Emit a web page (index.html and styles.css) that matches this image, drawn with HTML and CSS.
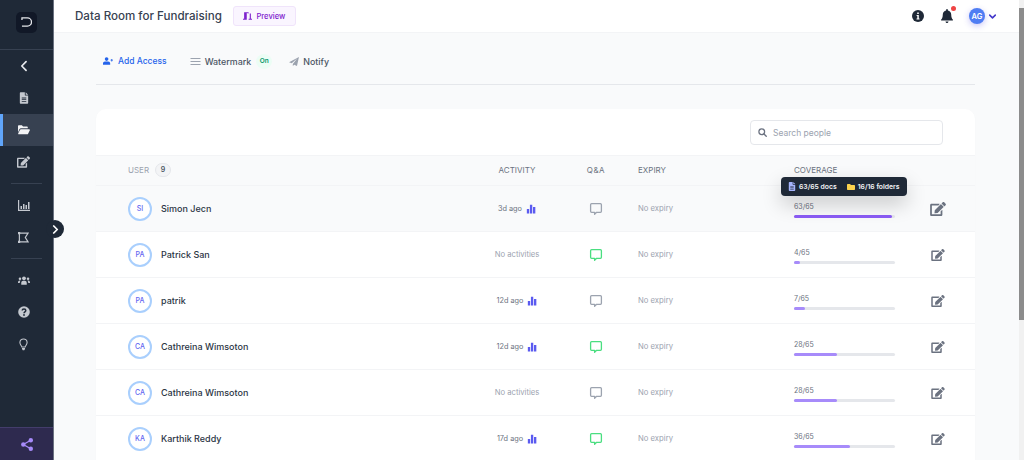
FILE: index.html
```html
<!DOCTYPE html>
<html lang="en">
<head>
    <meta charset="UTF-8">
    <meta name="viewport" content="width=device-width, initial-scale=1.0">
    <title>Data Room for Fundraising</title>
    <link rel="stylesheet" href="styles.css">
</head>
<body>

<svg class="sprites" xmlns="http://www.w3.org/2000/svg">
    <symbol id="i-edit" viewBox="0 0 576 512"><path fill="currentColor" d="M402.6 83.2l90.2 90.2c3.8 3.8 3.8 10 0 13.8L274.4 405.6l-92.8 10.3c-12.4 1.4-22.9-9.1-21.5-21.5l10.3-92.8L388.8 83.2c3.8-3.8 10-3.8 13.8 0zm162-22.9l-48.8-48.8c-15.2-15.2-39.9-15.2-55.2 0l-35.4 35.4c-3.8 3.8-3.8 10 0 13.8l90.2 90.2c3.8 3.8 10 3.8 13.8 0l35.4-35.4c15.2-15.3 15.2-40 0-55.2zM384 346.2V448H64V128h229.8c3.2 0 6.2-1.3 8.5-3.5l40-40c7.6-7.6 2.2-20.5-8.5-20.5H48C21.5 64 0 85.5 0 112v352c0 26.5 21.5 48 48 48h352c26.5 0 48-21.5 48-48V306.2c0-10.7-12.9-16-20.5-8.5l-40 40c-2.2 2.3-3.5 5.3-3.5 8.5z"/></symbol>
    <symbol id="i-bars" viewBox="0 0 12 12"><path fill="currentColor" d="M1 6h2.800v5.500H1zM4.700 1h2.800v10.500H4.700zM8.400 3.500h2.800v8H8.400z"/></symbol>
    <symbol id="i-chat" viewBox="0 0 14 14"><path fill="none" stroke="currentColor" stroke-width="1.3" stroke-linejoin="round" d="M2.6 1.7h8.8c.6 0 1 .4 1 1v6.6c0 .6-.4 1-1 1H7.6L5.6 12.3v-2H2.6c-.6 0-1-.4-1-1V2.7c0-.6.4-1 1-1z"/></symbol>
    <symbol id="i-doc" viewBox="0 0 12 14"><path fill="currentColor" d="M1 1.2C1 .5 1.5 0 2.2 0H7v3.4c0 .4.3.7.7.7H11v8.7c0 .7-.5 1.2-1.2 1.2H2.2C1.5 14 1 13.500 1 12.800zM8 0l3 3H8zM3.300 6.500v1h5.400v-1zM3.300 8.500v1h5.400v-1zM3.300 10.500v1h5.400v-1z" fill-rule="evenodd"/></symbol>
</svg>

<div class="app">
    <!-- Left rail -->
    <nav class="sidebar">
        <div class="brand">
            <span class="brand-mark">
                <svg viewBox="0 0 12 11" width="11" height="10"><path fill="none" stroke="#e5e7eb" stroke-width="1.400" d="M1 3.200V1h6a4.500 4.500 0 0 1 0 9H1"/></svg>
            </span>
        </div>
        <a class="rail-item rail-back">
            <svg viewBox="0 0 10 14" width="9" height="12"><path fill="none" stroke="currentColor" stroke-width="2" stroke-linecap="round" stroke-linejoin="round" d="M8 2L3 7l5 5"/></svg>
        </a>
        <a class="rail-item"><svg width="10" height="12"><use href="#i-doc"/></svg></a>
        <a class="rail-item active">
            <svg viewBox="0 0 14 11" width="12" height="10"><path fill="currentColor" d="M0 1.200C0 .5.500 0 1.200 0h3.300l1.400 1.400h4.400c.6 0 1.100.5 1.100 1.100v.9H3.400c-.7 0-1.300.4-1.600 1L0 8.200zM3.400 4.500H13c.7 0 1.100.7.800 1.300l-2 4.100c-.2.400-.6.600-1 .6H.9c-.6 0-.9-.6-.6-1.100l2.100-4.300c.2-.4.600-.6 1-.6z"/></svg>
        </a>
        <a class="rail-item"><svg width="13" height="12"><use href="#i-edit"/></svg></a>
        <div class="rail-divider"></div>
        <a class="rail-item">
            <svg viewBox="0 0 12 11" width="12" height="11"><path fill="currentColor" d="M0 0h1.200v9.800H12V11H0zM2.500 6h1.500v3H2.500zM5 4h1.500v5H5zM7.500 5h1.500v4H7.500zM10 2h1.500v7H10z"/></svg>
        </a>
        <a class="rail-item">
            <svg viewBox="0 0 12 12" width="11" height="11"><path fill="none" stroke="currentColor" stroke-width="1.300" d="M1.500 1.300h9.500L8 6l3 4.700H1.500z"/><path fill="currentColor" d="M0 0h2.400v2.400H0zM0 9.600h2.400V12H0z"/></svg>
        </a>
        <div class="rail-divider"></div>
        <a class="rail-item">
            <svg viewBox="0 0 14 10" width="12" height="9"><g fill="currentColor"><circle cx="7" cy="2.500" r="2.200"/><circle cx="2.300" cy="3" r="1.500"/><circle cx="11.700" cy="3" r="1.500"/><path d="M3.800 10V7.600C3.800 6.200 4.900 5.300 6 5.300h2c1.100 0 2.200.9 2.200 2.300V10zM0 7.500C0 6 .8 5 2 5h1c-.6.600-.9 1.500-.9 2.500V8H0zM14 7.500C14 6 13.200 5 12 5h-1c.6.600.9 1.500.9 2.500V8H14z"/></g></svg>
        </a>
        <a class="rail-item">
            <svg viewBox="0 0 12 12" width="12" height="12"><circle cx="6" cy="6" r="5.800" fill="currentColor"/><path fill="none" stroke="#1f2937" stroke-width="1.500" d="M4.200 4.600c0-1 .8-1.600 1.800-1.600s1.800.6 1.800 1.500C7.800 5.800 6 5.800 6 7.200"/><circle cx="6" cy="9" r=".9" fill="#1f2937"/></svg>
        </a>
        <a class="rail-item">
            <svg viewBox="0 0 10 14" width="9" height="13"><path fill="none" stroke="currentColor" stroke-width="1.200" d="M3.200 9.800C3 8.300 1 7.300 1 4.800a4 4 0 0 1 8 0c0 2.500-2 3.500-2.200 5z"/><path fill="currentColor" d="M3.300 10.800h3.400v1.200L5.800 13.500H4.200L3.300 12z"/></svg>
        </a>
        <div class="share">
            <svg viewBox="0 0 12 13" width="12" height="13"><g fill="#a78bfa"><circle cx="9.800" cy="2.300" r="2.200"/><circle cx="2.300" cy="6.500" r="2.200"/><circle cx="9.800" cy="10.700" r="2.200"/></g><path fill="none" stroke="#a78bfa" stroke-width="1.300" d="M9.800 2.300L2.300 6.500l7.500 4.200"/></svg>
        </div>
    </nav>
    <button class="rail-toggle">
        <svg viewBox="0 0 8 10" width="7" height="9"><path fill="none" stroke="#fff" stroke-width="2" stroke-linecap="round" stroke-linejoin="round" d="M2 1l4 4-4 4"/></svg>
    </button>

    <div class="main">
        <header class="topbar">
            <h1>Data Room for Fundraising</h1>
            <span class="preview-btn">
                <svg viewBox="0 0 12 10" width="9" height="8"><path fill="#7e22ce" d="M1.500 0h6v8.500H9V1.500h1.500v7H12V10H7.500V1.600L5 .9V10H0V8.500h1.500z"/></svg>
                Preview
            </span>
            <div class="topbar-right">
                <svg class="info" viewBox="0 0 12 12" width="12" height="12"><circle cx="6" cy="6" r="6" fill="#1f2937"/><path fill="#fff" d="M5.200 2.400h1.600V4H5.200zM4.600 5h2.200v3.500h.7v1H4.500v-1h.8V6h-.7z"/></svg>
                <span class="bell">
                    <svg viewBox="0 0 12 14" width="12" height="14"><path fill="#1f2937" d="M6 0c.5 0 .9.400.9.900v.6c2 .4 3.300 2 3.300 4 0 3.300 1 4.300 1.600 5 .4.400.1 1-.4 1H.6c-.5 0-.8-.6-.4-1 .6-.7 1.600-1.700 1.600-5 0-2 1.300-3.600 3.300-4V.9C5.100.4 5.500 0 6 0zM4.500 12.500h3C7.500 13.300 6.800 14 6 14s-1.500-.7-1.500-1.500z"/></svg>
                    <i class="bell-dot"></i>
                </span>
                <span class="me">AG</span>
                <svg viewBox="0 0 10 6" width="7" height="5"><path fill="none" stroke="#4338ca" stroke-width="2.200" stroke-linecap="round" stroke-linejoin="round" d="M1 1l4 4 4-4"/></svg>
            </div>
        </header>

        <div class="content">
            <div class="toolbar">
                <a class="tool tool-primary">
                    <svg viewBox="0 0 12 9" width="10" height="8"><g fill="#2563eb"><circle cx="4.300" cy="2.200" r="2.200"/><path d="M0 9V7.300C0 5.900 1 5 2.300 5h4C7.600 5 8.600 5.900 8.600 7.300V9zM9 3h1V2h1v1h1v1h-1v1h-1V4H9z"/></g></svg>
                    Add Access
                </a>
                <a class="tool">
                    <svg viewBox="0 0 10 7" width="11" height="7"><path fill="#9ca3af" d="M0 0h10v1H0zM0 3h10v1H0zM0 6h10v1H0z"/></svg>
                    <span class="tool-gap">Watermark</span>
                    <span class="badge-on">On</span>
                </a>
                <a class="tool">
                    <svg viewBox="0 0 11 10" width="10" height="9"><path fill="#9ca3af" d="M11 0L8.800 10 5.800 8.500 4.200 10V7.800L9 1.800 3 7 0 5.700z"/></svg>
                    Notify
                </a>
            </div>

            <section class="card">
                <div class="search-row">
                    <div class="search">
                        <svg viewBox="0 0 12 12" width="9" height="9"><circle cx="5" cy="5" r="3.800" fill="none" stroke="#6b7280" stroke-width="1.700"/><path stroke="#6b7280" stroke-width="1.800" stroke-linecap="round" d="M8 8l3 3"/></svg>
                        <span>Search people</span>
                    </div>
                </div>

                <div class="row head">
                    <div class="user-col">USER <span class="count">9</span></div>
                    <div class="center-col">ACTIVITY</div>
                    <div class="center-col qa-head">Q&amp;A</div>
                    <div>EXPIRY</div>
                    <div>COVERAGE</div>
                    <div></div>
                </div>

                <div class="row hovered">
                    <div class="user-col"><span class="avatar">SI</span><span class="name">Simon Jecn</span></div>
                    <div class="center-col activity">3d ago <svg width="10" height="10"><use href="#i-bars"/></svg></div>
                    <div class="center-col"><svg class="chat" width="14" height="14"><use href="#i-chat"/></svg></div>
                    <div class="expiry">No expiry</div>
                    <div class="coverage">
                        <span class="cov-label">63/65</span>
                        <div class="track"><div class="fill strong" style="width: 97%"></div></div>
                    </div>
                    <div class="edit"><svg width="16" height="14"><use href="#i-edit"/></svg></div>
                    <div class="cov-tip">
                        <svg width="8" height="9"><use href="#i-doc"/></svg>
                        <span>63/65 docs</span>
                        <svg class="tip-folder" viewBox="0 0 12 9" width="8" height="6"><path fill="#fcd34d" d="M1 0h3.500L6 1.500h5c.6 0 1 .4 1 1V8c0 .6-.4 1-1 1H1c-.6 0-1-.4-1-1V1c0-.6.4-1 1-1z"/></svg>
                        <span>16/16 folders</span>
                    </div>
                </div>

                <div class="row">
                    <div class="user-col"><span class="avatar">PA</span><span class="name">Patrick San</span></div>
                    <div class="center-col no-activity">No activities</div>
                    <div class="center-col"><svg class="chat green" width="14" height="14"><use href="#i-chat"/></svg></div>
                    <div class="expiry">No expiry</div>
                    <div class="coverage">
                        <span class="cov-label">4/65</span>
                        <div class="track"><div class="fill" style="width: 6%"></div></div>
                    </div>
                    <div class="edit edit-small"><svg width="14" height="12"><use href="#i-edit"/></svg></div>
                </div>

                <div class="row">
                    <div class="user-col"><span class="avatar">PA</span><span class="name">patrik</span></div>
                    <div class="center-col activity">12d ago <svg width="10" height="10"><use href="#i-bars"/></svg></div>
                    <div class="center-col"><svg class="chat" width="14" height="14"><use href="#i-chat"/></svg></div>
                    <div class="expiry">No expiry</div>
                    <div class="coverage">
                        <span class="cov-label">7/65</span>
                        <div class="track"><div class="fill" style="width: 11%"></div></div>
                    </div>
                    <div class="edit edit-small"><svg width="14" height="12"><use href="#i-edit"/></svg></div>
                </div>

                <div class="row">
                    <div class="user-col"><span class="avatar">CA</span><span class="name">Cathreina Wimsoton</span></div>
                    <div class="center-col activity">12d ago <svg width="10" height="10"><use href="#i-bars"/></svg></div>
                    <div class="center-col"><svg class="chat green" width="14" height="14"><use href="#i-chat"/></svg></div>
                    <div class="expiry">No expiry</div>
                    <div class="coverage">
                        <span class="cov-label">28/65</span>
                        <div class="track"><div class="fill" style="width: 43%"></div></div>
                    </div>
                    <div class="edit edit-small"><svg width="14" height="12"><use href="#i-edit"/></svg></div>
                </div>

                <div class="row">
                    <div class="user-col"><span class="avatar">CA</span><span class="name">Cathreina Wimsoton</span></div>
                    <div class="center-col no-activity">No activities</div>
                    <div class="center-col"><svg class="chat" width="14" height="14"><use href="#i-chat"/></svg></div>
                    <div class="expiry">No expiry</div>
                    <div class="coverage">
                        <span class="cov-label">28/65</span>
                        <div class="track"><div class="fill" style="width: 43%"></div></div>
                    </div>
                    <div class="edit edit-small"><svg width="14" height="12"><use href="#i-edit"/></svg></div>
                </div>

                <div class="row">
                    <div class="user-col"><span class="avatar">KA</span><span class="name">Karthik Reddy</span></div>
                    <div class="center-col activity">17d ago <svg width="10" height="10"><use href="#i-bars"/></svg></div>
                    <div class="center-col"><svg class="chat green" width="14" height="14"><use href="#i-chat"/></svg></div>
                    <div class="expiry">No expiry</div>
                    <div class="coverage">
                        <span class="cov-label">36/65</span>
                        <div class="track"><div class="fill" style="width: 55%"></div></div>
                    </div>
                    <div class="edit edit-small"><svg width="14" height="12"><use href="#i-edit"/></svg></div>
                </div>
            </section>
        </div>
    </div>

    <!-- Window scrollbar -->
    <div class="scrollbar"><div class="scroll-thumb"></div></div>
</div>

</body>
</html>
```

FILE: styles.css
```css
/* General Reset */
* {
    margin: 0;
    padding: 0;
    box-sizing: border-box;
}

html, body {
    height: 100%;
    overflow: hidden;
}

body {
    font-family: 'Inter', 'Liberation Sans', sans-serif;
    background: #f9fafb;
    color: #374151;
}

.sprites {
    display: none;
}

.app {
    display: flex;
    height: 460px;
    position: relative;
}

/* Sidebar */
.sidebar {
    width: 54px;
    flex-shrink: 0;
    height: 460px;
    background: #1f2937;
    border-right: 1px solid #6b7280;
    display: flex;
    flex-direction: column;
    color: #c4c8cf;
}

.brand {
    height: 50px;
    flex-shrink: 0;
    display: flex;
    align-items: center;
    justify-content: center;
    border-bottom: 1px solid #374151;
    padding-bottom: 5px;
}

.brand-mark {
    width: 21px;
    height: 21px;
    background: #111827;
    border-radius: 5px;
    display: flex;
    align-items: center;
    justify-content: center;
}

.rail-item {
    height: 32px;
    flex-shrink: 0;
    display: flex;
    align-items: center;
    justify-content: center;
    padding-right: 16px;
    padding-left: 10px;
}

.rail-back {
    color: #e5e7eb;
}

.rail-item.active {
    background: #374151;
    border-left: 3px solid #60a5fa;
    padding-left: 7px;
    color: #f3f4f6;
}

.rail-divider {
    height: 1px;
    background: #374151;
    margin: 5px 11px;
    flex-shrink: 0;
}

.share {
    margin-top: auto;
    height: 33px;
    background: #2e2a4f;
    border-top: 1px solid #433d6b;
    display: flex;
    align-items: center;
    justify-content: center;
}

.rail-toggle {
    position: absolute;
    left: 46px;
    top: 220px;
    width: 18px;
    height: 18px;
    border-radius: 50%;
    background: #1f2937;
    border: none;
    display: flex;
    align-items: center;
    justify-content: center;
}

/* Main area */
.main {
    flex: 1;
    min-width: 0;
    overflow: hidden;
}

.topbar {
    height: 33px;
    background: #fff;
    border-bottom: 1px solid #f3f4f6;
    display: flex;
    align-items: center;
    padding-left: 21px;
}

.topbar h1 {
    font-size: 11.6px;
    font-weight: 500;
    color: #374151;
}

.preview-btn {
    margin-left: 11px;
    height: 20px;
    width: 63px;
    background: #faf5ff;
    border: 1px solid #f0e4fb;
    border-radius: 3px;
    color: #7e22ce;
    font-size: 7.6px;
    font-weight: 500;
    display: flex;
    align-items: center;
    justify-content: center;
    gap: 4px;
}

.topbar-right {
    margin-left: auto;
    width: 112px;
    display: flex;
    align-items: center;
}

.bell {
    position: relative;
    display: flex;
    margin-left: 17px;
}

.bell-dot {
    position: absolute;
    top: -3px;
    right: -3px;
    width: 5px;
    height: 5px;
    background: #ef4444;
    border-radius: 50%;
}

.me {
    margin-left: 16px;
    margin-right: 4px;
    width: 16px;
    height: 16px;
    border-radius: 50%;
    background: #4f7df3;
    color: #fff;
    font-size: 7.5px;
    font-weight: 600;
    display: flex;
    align-items: center;
    justify-content: center;
    box-shadow: 0 2px 6px rgba(79, 70, 229, 0.3);
}

.content {
    padding-left: 42px;
    width: 921px;
}

.toolbar {
    height: 51px;
    margin-top: 1px;
    padding: 4px 7px 0;
    border-bottom: 1px solid #e5e7eb;
    display: flex;
    align-items: center;
    gap: 17px;
    font-size: 8.9px;
}

.tool {
    display: flex;
    align-items: center;
    gap: 4px;
    color: #4b5563;
    font-weight: 500;
    white-space: nowrap;
}

.tool-gap {
    margin-right: 1px;
}

.tool-primary {
    color: #2563eb;
    font-size: 8.5px;
    gap: 5px;
    margin-right: 6px;
}

.badge-on {
    width: 16px;
    height: 15px;
    background: #ecfdf5;
    color: #059669;
    font-size: 6.5px;
    font-weight: 600;
    border-radius: 50%;
    display: flex;
    align-items: center;
    justify-content: center;
}

/* Card + table */
.card {
    margin-top: 24px;
    background: #fff;
    border-radius: 10px 10px 0 0;
    box-shadow: 0 1px 3px rgba(0, 0, 0, 0.02);
}

.search-row {
    height: 46px;
    display: flex;
    justify-content: flex-end;
    align-items: flex-start;
    padding: 11px 32px 0 0;
}

.search {
    width: 193px;
    height: 25px;
    border: 1px solid #e5e7eb;
    border-radius: 4px;
    display: flex;
    align-items: center;
    gap: 6px;
    padding-left: 7px;
    font-size: 8.5px;
    color: #9ca3af;
}

.row {
    position: relative;
    display: grid;
    grid-template-columns: 352px 74px 84px 156px 136px 1fr;
    align-items: center;
    height: 46px;
    padding-left: 32px;
    border-bottom: 1px solid #f3f4f6;
}

.row.head {
    height: 31px;
    padding-bottom: 2px;
    background: #f9fafb;
    border-top: 1px solid #f3f4f6;
    font-size: 8px;
    color: #6b7280;
}

.row.hovered {
    background: #f9fafb;
}

.qa-head {
    letter-spacing: 0.5px;
}

.user-col {
    display: flex;
    align-items: center;
    color: #9ca3af;
}

.center-col {
    display: flex;
    align-items: center;
    justify-content: center;
}

.count {
    margin-left: 6px;
    width: 16px;
    height: 14px;
    border-radius: 8px;
    background: #f3f4f6;
    border: 1px solid #e5e7eb;
    color: #4b5563;
    font-size: 7px;
    font-weight: 600;
    display: inline-flex;
    align-items: center;
    justify-content: center;
}

.avatar {
    width: 24px;
    height: 24px;
    border-radius: 50%;
    border: 2px solid #a9cffd;
    background: #fff;
    color: #6366f1;
    font-size: 7px;
    font-weight: 500;
    display: flex;
    align-items: center;
    justify-content: center;
}

.name {
    margin-left: 9px;
    font-size: 9px;
    font-weight: 500;
    color: #2b3544;
}

.activity {
    font-size: 7.3px;
    color: #6b7280;
    gap: 4px;
}

.activity svg {
    color: #5b5bf0;
}

.no-activity {
    font-size: 7.7px;
    color: #9ca3af;
    white-space: nowrap;
}

.chat {
    color: #9ca3af;
}

.chat.green {
    color: #4ade80;
}

.expiry {
    font-size: 7.7px;
    color: #9ca3af;
}

.coverage {
    display: flex;
    flex-direction: column;
    gap: 4px;
    width: 101px;
    padding-top: 2px;
}

.cov-label {
    font-size: 7px;
    color: #6b7280;
}

.track {
    height: 3px;
    border-radius: 2px;
    background: #e5e7eb;
}

.fill {
    height: 3px;
    border-radius: 2px;
    background: #a78bfa;
}

.fill.strong {
    background: #8b5cf6;
}

.edit {
    color: #6b7280;
    display: flex;
}

.edit-small {
    padding-left: 1px;
}

/* Tooltip over the coverage cell */
.cov-tip {
    position: absolute;
    left: 685px;
    top: -9px;
    width: 126px;
    height: 19px;
    background: #1f2937;
    border-radius: 4px;
    color: #f3f4f6;
    font-size: 6.8px;
    font-weight: 600;
    white-space: nowrap;
    display: flex;
    align-items: center;
    gap: 3px;
    padding-left: 7px;
    box-shadow: 0 8px 20px rgba(0, 0, 0, 0.2);
}

.cov-tip svg {
    color: #a5b4fc;
}

.tip-folder {
    margin-left: 7px;
}

/* Scrollbar */
.scrollbar {
    position: absolute;
    right: 0;
    top: 0;
    width: 5px;
    height: 460px;
    background: #f1f1f1;
}

.scroll-thumb {
    margin-top: 8px;
    height: 312px;
    background: #8c8c8c;
}
```
